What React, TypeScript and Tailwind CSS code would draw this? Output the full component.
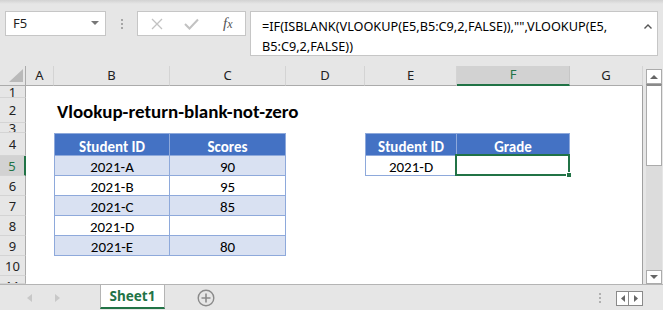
import React from "react";

const GREEN = "#217346";
const cellFont = { fontFamily: "Carlito, Lato, 'Liberation Sans', sans-serif" };

const COLS = ["A", "B", "C", "D", "E", "F", "G"];
const ROWS = [1, 2, 3, 4, 5, 6, 7, 8, 9, 10, 11];

const scores: [string, string][] = [
  ["2021-A", "90"],
  ["2021-B", "95"],
  ["2021-C", "85"],
  ["2021-D", ""],
  ["2021-E", "80"],
];

function Corner() {
  return (
    <div className="flex items-end justify-end border-r border-b border-[#ababab] bg-[#e6e6e6] pr-[2px] pb-[3px]">
      <svg width="14" height="13" viewBox="0 0 14 13">
        <polygon points="14,0 14,13 0,13" fill="#b9b9b9" />
      </svg>
    </div>
  );
}

function ColHeader({ label }: { label: string }) {
  const sel = label === "F";
  return (
    <div
      className={
        sel
          ? "flex items-center justify-center bg-[#d2d2d2] border-r border-[#c6c6c6] border-b-2 border-b-[#217346] text-[13px] text-[#217346]"
          : "flex items-center justify-center bg-[#e6e6e6] border-r border-[#d4d4d4] border-b border-b-[#ababab] text-[13px] text-[#222]"
      }
    >
      {label}
    </div>
  );
}

function RowHeader({ n }: { n: number }) {
  const sel = n === 5;
  return (
    <div
      className={
        (sel
          ? "bg-[#d2d2d2] border-r-2 border-r-[#217346] text-[#217346]"
          : "bg-[#e6e6e6] border-r border-r-[#ababab] text-[#222]") +
        " flex justify-center overflow-hidden border-b border-b-[#d4d4d4] text-[13px] " +
        (n === 11 ? "items-start" : "items-center")
      }
    >
      <div className="flex h-[20px] shrink-0 items-center pt-[1px] leading-none">{n}</div>
    </div>
  );
}

function HeadCell({ text, first }: { text: string; first?: boolean }) {
  return (
    <div
      className={
        "flex items-end justify-center bg-[#4472c4] border-t border-r border-b border-[#8ea9db] text-[15px] font-bold leading-none text-white " +
        (first ? "border-l" : "")
      }
      style={cellFont}
    >
      {text}
    </div>
  );
}

function DataCell({ text, first, band }: { text: string; first?: boolean; band?: boolean }) {
  return (
    <div
      className={
        "flex items-end justify-center border-r border-b border-[#8ea9db] text-[15px] leading-none text-black " +
        (band ? "bg-[#d9e1f2] " : "bg-white ") +
        (first ? "border-l" : "")
      }
      style={cellFont}
    >
      {text}
    </div>
  );
}

function Cell({ r, c }: { r: number; c: string }) {
  const last = c === "G" ? " border-r border-r-[#a0a0a0]" : "";
  if (r === 2 && c === "B") {
    return (
      <div className="relative z-10 flex items-end bg-white pl-[3px] pb-[2px]">
        <span className="whitespace-nowrap text-[19px] font-bold leading-none text-black" style={cellFont}>
          Vlookup-return-blank-not-zero
        </span>
      </div>
    );
  }
  if (r === 4 && c === "B") return <HeadCell text="Student ID" first />;
  if (r === 4 && c === "C") return <HeadCell text="Scores" />;
  if (r === 4 && c === "E") return <HeadCell text="Student ID" first />;
  if (r === 4 && c === "F") return <HeadCell text="Grade" />;
  if (r >= 5 && r <= 9 && (c === "B" || c === "C")) {
    const row = scores[r - 5];
    return <DataCell text={c === "B" ? row[0] : row[1]} first={c === "B"} band={r % 2 === 1} />;
  }
  if (r === 5 && c === "E") return <DataCell text="2021-D" first />;
  if (r === 5 && c === "F") {
    return (
      <div className="relative border-r border-b border-[#8ea9db] bg-white">
        <div className="absolute -top-[2px] -left-[2px] -right-[1px] -bottom-[1px] border-2 border-[#217346]" />
        <div className="absolute -right-[3px] -bottom-[3px] h-[6px] w-[6px] border border-white bg-[#217346]" />
      </div>
    );
  }
  return <div className={"bg-white" + last} />;
}

export default function App() {
  return (
    <div
      className="flex h-[310px] w-[663px] flex-col overflow-hidden bg-[#e6e6e6]"
      style={{ fontFamily: "'Noto Sans', 'Open Sans', sans-serif" }}
    >
      {/* Toolbar / formula bar */}
      <div className="relative h-[66px] shrink-0">
        <div className="absolute inset-x-0 top-0 h-[4px] bg-gradient-to-b from-[#d2d2d2] to-[#e6e6e6]" />
        <div className="flex items-start pt-[11px] pl-[5px]">
          <div className="flex h-[25px] w-[101px] items-center justify-between border border-[#c6c6c6] bg-white pl-[7px] pr-[6px] text-[13px] text-[#222]">
            <span>F5</span>
            <svg width="8" height="5" viewBox="0 0 8 5">
              <polygon points="0,0 8,0 4,4" fill="#777" />
            </svg>
          </div>
          <div className="flex h-[25px] w-[31px] flex-col items-center justify-center gap-[2px]">
            <span className="h-[2px] w-[2px] bg-[#a6a6a6]" />
            <span className="h-[2px] w-[2px] bg-[#a6a6a6]" />
            <span className="h-[2px] w-[2px] bg-[#a6a6a6]" />
          </div>
          <div className="flex h-[25px] w-[109px] items-center border border-[#c6c6c6] bg-white">
            <svg className="ml-[12px]" width="14" height="14" viewBox="0 0 14 14">
              <path d="M2 2 L12 12 M12 2 L2 12" stroke="#c2c2c2" strokeWidth="1.3" fill="none" />
            </svg>
            <svg className="ml-[20px]" width="15" height="12" viewBox="0 0 15 12">
              <path d="M1 6 L5.5 10.5 L14 1.5" stroke="#c2c2c2" strokeWidth="2" fill="none" />
            </svg>
            <span
              className="ml-[24px] text-[15px] italic text-[#555]"
              style={{ fontFamily: "'Liberation Serif', serif" }}
            >
              f<span className="text-[12px]">x</span>
            </span>
          </div>
          <div className="ml-[4px] flex h-[45px] w-[408px] items-start justify-between border border-[#c6c6c6] bg-white pl-[11px] pr-[5px] pt-[4px]">
            <div className="text-[12.7px] leading-[20px] text-black">
              <div>=IF(ISBLANK(VLOOKUP(E5,B5:C9,2,FALSE)),"",VLOOKUP(E5,</div>
              <div>B5:C9,2,FALSE))</div>
            </div>
            <svg className="mt-[8px]" width="8" height="5" viewBox="0 0 8 5">
              <path d="M0.5 4.5 L4 1 L7.5 4.5" stroke="#555" strokeWidth="1.4" fill="none" />
            </svg>
          </div>
        </div>
      </div>

      {/* Sheet area */}
      <div className="flex h-[218px] shrink-0">
        <div className="grid w-[643px] grid-cols-[26px_28px_116px_116px_79px_92px_113px_73px] grid-rows-[20px_12px_25px_10px_23px_20px_20px_20px_20px_20px_20px_8px]">
          <Corner />
          {COLS.map((c) => (
            <ColHeader key={c} label={c} />
          ))}
          {ROWS.map((r) => (
            <React.Fragment key={r}>
              <RowHeader n={r} />
              {COLS.map((c) => (
                <Cell key={c} r={r} c={c} />
              ))}
            </React.Fragment>
          ))}
        </div>
        {/* vertical scrollbar */}
        <div className="flex w-[20px] flex-col pl-[3px] pr-[1px] pt-[3px]">
          <div className="flex flex-1 flex-col bg-[#dcdcdc]">
            <div className="flex h-[15px] items-center justify-center border border-[#ababab] bg-white">
              <svg width="8" height="4" viewBox="0 0 8 4">
                <polygon points="0,4 8,4 4,0" fill="#666" />
              </svg>
            </div>
            <div className="h-[82px] border border-t-2 border-[#ababab] border-t-[#8a8a8a] bg-white" />
            <div className="flex-1" />
            <div className="flex h-[14px] items-center justify-center border border-[#ababab] bg-white">
              <svg width="8" height="4" viewBox="0 0 8 4">
                <polygon points="0,0 8,0 4,4" fill="#666" />
              </svg>
            </div>
          </div>
        </div>
      </div>

      {/* Sheet tabs */}
      <div className="flex h-[26px] shrink-0 items-start border-t border-[#b4b4b4]">
        <div className="flex h-[25px] w-[100px] items-center pl-[27px] gap-[23px]">
          <svg width="5" height="8" viewBox="0 0 5 8">
            <polygon points="5,0 5,8 0,4" fill="#c8c8c8" />
          </svg>
          <svg width="5" height="8" viewBox="0 0 5 8">
            <polygon points="0,0 0,8 5,4" fill="#c8c8c8" />
          </svg>
        </div>
        <div className="flex h-[24px] w-[65px] items-center justify-center border-x border-[#b4b4b4] border-b-2 border-b-[#217346] bg-white">
          <span className="text-[13.5px] font-bold" style={{ color: GREEN }}>
            Sheet1
          </span>
        </div>
        <div className="ml-[32px] flex h-[25px] items-center">
          <svg width="18" height="18" viewBox="0 0 18 18">
            <circle cx="9" cy="9" r="7.8" stroke="#8a8a8a" strokeWidth="1.4" fill="none" />
            <path d="M9 4.5 V13.5 M4.5 9 H13.5" stroke="#8a8a8a" strokeWidth="1.6" />
          </svg>
        </div>
        <div className="flex-1" />
        <div className="flex h-[25px] flex-col items-center justify-center gap-[2px]">
          <span className="h-[2px] w-[2px] bg-[#b0b0b0]" />
          <span className="h-[2px] w-[2px] bg-[#b0b0b0]" />
          <span className="h-[2px] w-[2px] bg-[#b0b0b0]" />
        </div>
        <div className="ml-[15px] mr-[20px] mt-[6px] flex h-[15px]">
          <div className="flex w-[13px] items-center justify-center border border-[#8a8a8a] bg-white">
            <svg width="4" height="7" viewBox="0 0 4 7">
              <polygon points="4,0 4,7 0,3.5" fill="#666" />
            </svg>
          </div>
          <div className="flex w-[14px] items-center justify-center border border-l-0 border-[#8a8a8a] bg-white">
            <svg width="4" height="7" viewBox="0 0 4 7">
              <polygon points="0,0 0,7 4,3.5" fill="#666" />
            </svg>
          </div>
        </div>
      </div>
    </div>
  );
}
